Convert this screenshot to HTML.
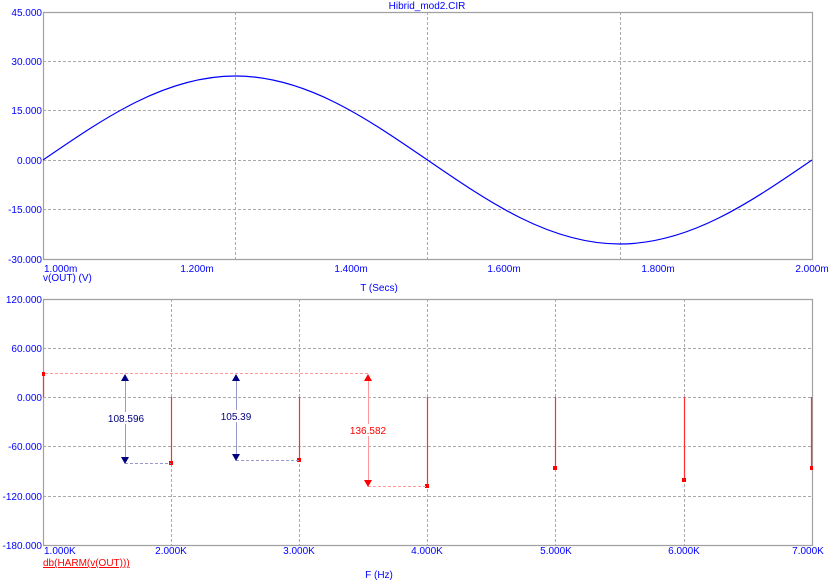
<!DOCTYPE html>
<html><head><meta charset="utf-8"><style>
html,body{margin:0;padding:0;background:#fff;width:833px;height:584px;overflow:hidden}
svg{display:block}
text{font-family:"Liberation Sans","Noto Sans CJK JP",sans-serif;font-size:10px}
</style></head><body>
<svg width="833" height="584" viewBox="0 0 833 584">
<g stroke="#aaa" stroke-width="1" stroke-dasharray="3,2" fill="none">
<path d="M235.5 12V259M427.5 12V259M620.5 12V259M43 61.5H812M43 110.5H812M43 160.5H812M43 209.5H812"/>
<path d="M171.5 299V545M299.5 299V545M427.5 299V545M555.5 299V545M684.5 299V545M43 348.5H812M43 397.5H812M43 446.5H812M43 496.5H812"/>
</g>
<g stroke="#a0a0a0" stroke-width="1.2" fill="none">
<path d="M43.5 12.5H812.5V259.5H43.5Z"/>
<path d="M43.5 299.5H812.5V545.5H43.5Z"/>
</g>
<path d="M43,160 C105.7,116.97 165.67,76 235.25,76 C304.83,76 364.8,116.97 427.5,160 C490.2,203.03 550.17,244 619.75,244 C689.33,244 749.3,203.03 812,160" stroke="#0000ff" stroke-width="1.2" fill="none"/>
<g fill="#0000ff" text-anchor="end">
<text x="42" y="16">45.000</text><text x="42" y="65">30.000</text><text x="42" y="114">15.000</text><text x="42" y="164">0.000</text><text x="42" y="213">-15.000</text><text x="42" y="263">-30.000</text>
<text x="42" y="303">120.000</text><text x="42" y="352">60.000</text><text x="42" y="401">0.000</text><text x="42" y="450">-60.000</text><text x="42" y="500">-120.000</text><text x="42" y="549">-180.000</text>
</g>
<g fill="#0000ff" text-anchor="middle">
<text x="427" y="9">Hibrid_mod2.CIR</text>
<text x="197" y="272">1.200m</text><text x="351" y="272">1.400m</text><text x="504" y="272">1.600m</text><text x="658" y="272">1.800m</text><text x="812" y="272">2.000m</text>
<text x="379" y="291">T (Secs)</text>
<text x="171" y="554">2.000K</text><text x="299" y="554">3.000K</text><text x="427" y="554">4.000K</text><text x="556" y="554">5.000K</text><text x="684" y="554">6.000K</text><text x="808" y="554">7.000K</text>
<text x="379" y="578">F (Hz)</text>
</g>
<text x="44" y="272" fill="#0000ff">1.000m</text>
<text x="43" y="281" fill="#0000ff">v(OUT) (V)</text>
<text x="44" y="554" fill="#0000ff">1.000K</text>
<text x="43" y="566" fill="#ff0000" text-decoration="underline">db(HARM(v(OUT)))</text>
<g stroke="#ff3030" stroke-width="1.2">
<path d="M43.5 374V397M171.5 397V463M299.5 397V460M427.5 397V486M555.5 397V468M684.5 397V480M811.5 397V468"/>
</g>
<g fill="#ff0000">
<rect x="42" y="372" width="3" height="4"/><rect x="169" y="461" width="4" height="4"/><rect x="297" y="458" width="4" height="4"/><rect x="425" y="484" width="4" height="4"/><rect x="553" y="466" width="4" height="4"/><rect x="682" y="478" width="4" height="4"/><rect x="810" y="466" width="3" height="4"/>
</g>
<g stroke-dasharray="3,2" stroke-width="1" fill="none">
<path d="M45 373.5H368" stroke="#ff9999"/>
<path d="M125 463.5H171" stroke="#9999cc"/>
<path d="M236 460.5H299" stroke="#9999cc"/>
<path d="M368 486.5H427" stroke="#ff9999"/>
</g>
<path d="M125.5 380V457M236.5 380V454" stroke="#9999cc" stroke-width="1"/>
<path d="M368.5 381V480" stroke="#ff9999" stroke-width="1"/>
<g fill="#000080">
<path d="M125 374l-4 7h8zM125 464l-4 -7h8zM236 374l-4 7h8zM236 461l-4 -7h8z"/>
</g>
<g fill="#ff0000"><path d="M368 374l-4 7h8zM368 487l-4 -7h8z"/></g>
<rect x="106" y="412" width="40" height="12" fill="#fff"/>
<rect x="219" y="410" width="34" height="12" fill="#fff"/>
<rect x="349" y="424" width="40" height="12" fill="#fff"/>
<text x="126" y="422" fill="#000080" text-anchor="middle">108.596</text>
<text x="236" y="420" fill="#000080" text-anchor="middle">105.39</text>
<text x="368" y="434" fill="#ff0000" text-anchor="middle">136.582</text>
</svg>
</body></html>
